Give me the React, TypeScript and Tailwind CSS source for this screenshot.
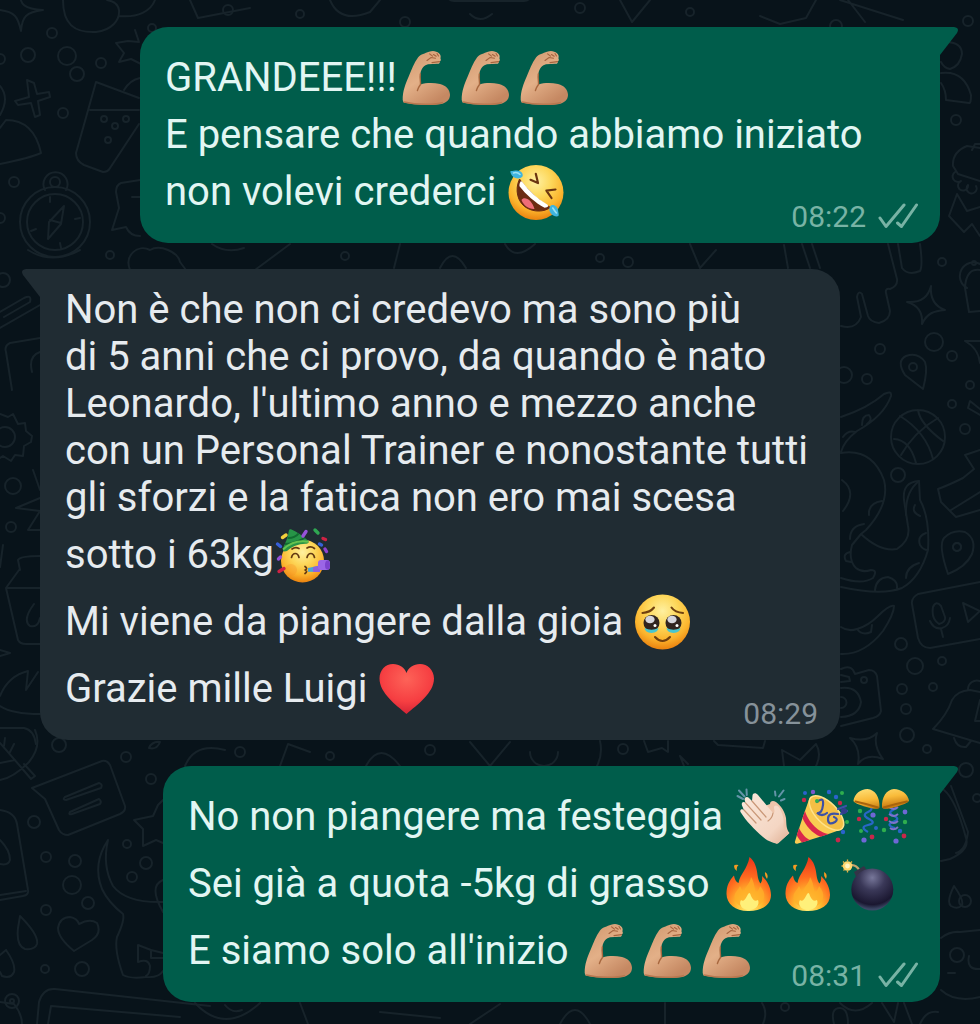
import type { ReactNode } from "react";

type EmojiName =
	| "arm"
	| "rofl"
	| "party"
	| "moved"
	| "heart"
	| "clap"
	| "popper"
	| "balls"
	| "fire"
	| "bomb";

interface Message {
	side: "in" | "out";
	width: string;
	time: string;
	lines: { text: string; emoji?: EmojiName[] }[];
}

const messages: Message[] = [
	{
		side: "out",
		width: "max-w-[800px]",
		time: "08:22",
		lines: [
			{ text: "GRANDEEE!!!", emoji: ["arm", "arm", "arm"] },
			{ text: "E pensare che quando abbiamo iniziato" },
			{ text: "non volevi crederci ", emoji: ["rofl"] },
		],
	},
	{
		side: "in",
		width: "max-w-[800px]",
		time: "08:29",
		lines: [
			{ text: "Non è che non ci credevo ma sono più" },
			{ text: "di 5 anni che ci provo, da quando è nato" },
			{ text: "Leonardo, l'ultimo anno e mezzo anche" },
			{ text: "con un Personal Trainer e nonostante tutti" },
			{ text: "gli sforzi e la fatica non ero mai scesa" },
			{ text: "sotto i 63kg", emoji: ["party"] },
			{ text: "Mi viene da piangere dalla gioia ", emoji: ["moved"] },
			{ text: "Grazie mille Luigi ", emoji: ["heart"] },
		],
	},
	{
		side: "out",
		width: "max-w-[777px]",
		time: "08:31",
		lines: [
			{
				text: "No non piangere ma festeggia ",
				emoji: ["clap", "popper", "balls"],
			},
			{
				text: "Sei già a quota -5kg di grasso ",
				emoji: ["fire", "fire", "bomb"],
			},
			{ text: "E siamo solo all'inizio ", emoji: ["arm", "arm", "arm"] },
		],
	},
];

function Gradients() {
	return (
		<svg className="absolute h-0 w-0" aria-hidden="true">
			<defs>
				<radialGradient id="face" cx="0.5" cy="0.3" r="0.7">
					<stop offset="0" stopColor="#fff0a0" />
					<stop offset="0.4" stopColor="#fdd75a" />
					<stop offset="0.75" stopColor="#fbb32c" />
					<stop offset="1" stopColor="#ea820f" />
				</radialGradient>
				<linearGradient id="skin" x1="0" y1="0" x2="0.6" y2="1">
					<stop offset="0" stopColor="#cf966c" />
					<stop offset="0.55" stopColor="#e3b088" />
					<stop offset="1" stopColor="#c58862" />
				</linearGradient>
				<linearGradient id="pale" x1="0" y1="0" x2="1" y2="1">
					<stop offset="0" stopColor="#fbe9dc" />
					<stop offset="0.7" stopColor="#f4d6c3" />
					<stop offset="1" stopColor="#dfae92" />
				</linearGradient>
				<radialGradient id="love" cx="0.5" cy="0.3" r="0.75">
					<stop offset="0" stopColor="#fd6358" />
					<stop offset="0.6" stopColor="#f63f42" />
					<stop offset="1" stopColor="#cf1f33" />
				</radialGradient>
				<radialGradient id="flame" cx="0.5" cy="0.95" r="0.9">
					<stop offset="0" stopColor="#fff37a" />
					<stop offset="0.35" stopColor="#ffb52c" />
					<stop offset="0.65" stopColor="#ff6a1f" />
					<stop offset="1" stopColor="#ee3a1c" />
				</radialGradient>
				<radialGradient id="iron" cx="0.5" cy="0.22" r="0.75">
					<stop offset="0" stopColor="#77779a" />
					<stop offset="0.4" stopColor="#3a3858" />
					<stop offset="0.85" stopColor="#1a1730" />
					<stop offset="1" stopColor="#3c4866" />
				</radialGradient>
				<linearGradient id="gold" x1="0" y1="0" x2="0.4" y2="1">
					<stop offset="0" stopColor="#ffe27a" />
					<stop offset="0.55" stopColor="#f9bb3a" />
					<stop offset="1" stopColor="#c97c12" />
				</linearGradient>
			</defs>
		</svg>
	);
}

const drawings: Record<EmojiName, ReactNode> = {
	arm: (
		<>
			<path
				d="M5.7 52C5.6 43 8.5 36 11.7 28.5C14.5 22 17 14.5 21 9.5C24 6 28 5.5 32 3.8C36 2 39.5 3.2 42 5.2C43.8 6.8 44 8.5 43.4 10.2C44.2 11.6 43.8 12.8 42.8 13.4C43 15.2 42 16 40 15.8L31 16.2C27.5 17 24.5 20 23.5 25C22.6 29 23.6 32 23.5 36.5C29 34.8 36 34.6 43 36C49.5 37.6 53 42 53 47C52.8 52 49.5 55 43 56.2C32 57.6 17 57 6.5 54.5Z"
				fill="url(#skin)"
			/>
			<path
				d="M23.5 36.5C22 38.5 20.8 40.5 20.4 42.5M23.3 26C22.6 31 23.8 33 23.5 36.5"
				fill="none"
				stroke="#a8683f"
				strokeWidth="1.4"
				strokeLinecap="round"
			/>
			<path
				d="M30 12.5L34 9.5L38.5 10.2M35 14.6L42.5 13.6M36.5 6.5L39.2 8.2M32.6 5.8L35.5 8.2M40 5.5L41.5 8"
				fill="none"
				stroke="#a5643e"
				strokeWidth="1.1"
				strokeLinecap="round"
			/>
			<path
				d="M7 54C20 57 38 57 46 54.5"
				fill="none"
				stroke="#b87850"
				strokeWidth="1.6"
			/>
		</>
	),
	rofl: (
		<>
			<circle cx="30" cy="30.5" r="27.5" fill="url(#face)" />
			<path
				d="M13.5 17C8.5 28 11.5 40 20 45.5C28 50.5 38 50 44.5 45.5C33 39 22 29 13.5 17Z"
				fill="#6b2b12"
				stroke="#6b2b12"
				strokeWidth="1"
			/>
			<path
				d="M15.5 38C18 33.5 26 37.5 28.5 47C23 47.5 17.5 43.5 15.5 38Z"
				fill="#ee6d77"
			/>
			<path
				d="M14.6 19.5C13.6 21 13.3 22.6 13.5 24.2C20 32.5 29 40.5 38.6 45.8C40.4 45.6 41.6 45 42.2 44.3C42.2 43.3 41.6 42.6 40.5 41.9C31 36.3 23 29 16.6 20.2C15.8 19.2 15.1 19 14.6 19.5Z"
				fill="#fff"
			/>
			<path
				d="M24.5 17.8L32 21L29.8 11.8M49.5 27.5L40.4 28.6L45.5 36"
				fill="none"
				stroke="#6b3510"
				strokeWidth="2.2"
				strokeLinecap="round"
				strokeLinejoin="round"
			/>
			<path
				d="M16.5 14.5C14.5 17 9.8 17 7.2 14.8C5 12.8 4 9.8 4.4 9.2C5.4 8.6 7 9.2 9.2 8.6C13.5 7.6 18 10.8 16.5 14.5Z"
				fill="#3fb4de"
			/>
			<path
				d="M45 43.5C48 41.8 51.4 44.6 52 48C52.3 50.6 53.2 53 52.4 54C50.6 55.2 46.2 53.8 44.6 51C43 48.4 42.8 45 45 43.5Z"
				fill="#3fb4de"
			/>
			<path
				d="M7.5 11Q11 9.6 14 12.5M46.8 46Q48.6 49 50.4 51"
				fill="none"
				stroke="#9be2f4"
				strokeWidth="1.6"
				strokeLinecap="round"
			/>
		</>
	),
	party: (
		<>
			<circle cx="28.5" cy="36" r="21.5" fill="url(#face)" />
			<circle cx="17" cy="45" r="6" fill="#f58a28" opacity="0.3" />
			<path
				d="M9 23C8.5 26.5 10 27 13 26C18 21.5 25 18.5 32.5 18.8C35 18.5 35.2 17 34 15.5C28 10.5 23 7 17.5 4.5C16 4 15 4.5 14.8 6C14 12 11.5 18 9 23Z"
				fill="#279447"
			/>
			<path
				d="M13.6 13C18 13.5 23 11 24.5 8.5M11 19C18 19 28 15 30.5 12.5"
				fill="none"
				stroke="#126b31"
				strokeWidth="2"
			/>
			<path
				d="M9 24.5Q20 14.5 34 16.8"
				fill="none"
				stroke="#65c34f"
				strokeWidth="2"
			/>
			<path
				d="M17.5 32.5Q18.5 28.5 21.3 28.5T25 32.5M33 32.5Q34 28.5 36.8 28.5T40.5 32.5M18 24Q21.5 21.5 25 23.5M33 23Q37 20.5 40.5 23.5M31 41.5Q34 43.5 31.4 45Q34 46.5 31 48.5"
				fill="none"
				stroke="#643a12"
				strokeWidth="1.7"
				strokeLinecap="round"
			/>
			<path d="M34 43L46 40.5V47L34 46.8Z" fill="#4aa4d6" />
			<path d="M39 42L46 40.5V47L39 47Z" fill="#8d62dc" />
			<rect x="44" y="35" width="12" height="10" rx="3" fill="#9b66e6" />
			<ellipse cx="53.5" cy="40" rx="2.5" ry="4.6" fill="#7c42cc" />
			<g strokeWidth="3.4" strokeLinecap="round">
				<path d="M29 11L32 6.5M4.5 34L6.5 32" stroke="#9552d9" />
				<path d="M41 5L44 8" stroke="#2fa852" />
				<path d="M49 13.5L51.5 14.5M5 46.5L10 43.5" stroke="#cf2244" />
				<path d="M45.5 19L47.5 20M3.5 19L6.5 21.5" stroke="#375fd8" />
				<path d="M8.5 12.5L12 10" stroke="#f2d13c" />
				<path d="M51 24L52.5 26.5" stroke="#8f43cf" />
			</g>
		</>
	),
	moved: (
		<>
			<circle cx="29.5" cy="30" r="27.5" fill="url(#face)" />
			<circle cx="18.5" cy="31" r="8" fill="#30241f" />
			<circle cx="40.5" cy="31" r="8" fill="#30241f" />
			<path
				d="M11.5 36Q18.5 39.5 25.5 36Q25 40.5 18.5 41Q12 40.5 11.5 36ZM33.5 36Q40.5 39.5 47.5 36Q47 40.5 40.5 41Q34 40.5 33.5 36Z"
				fill="#48c6cf"
			/>
			<ellipse cx="17" cy="27.5" rx="4.6" ry="3.8" fill="#d4d5dc" />
			<ellipse cx="39" cy="27.5" rx="4.6" ry="3.8" fill="#d4d5dc" />
			<circle cx="22" cy="33.5" r="1.5" fill="#fff" />
			<circle cx="44" cy="33.5" r="1.5" fill="#fff" />
			<path
				d="M9.5 21Q17 20.5 21 15.5M50 21Q42 20.5 38.5 15.5M22 45Q29.5 53 37 45"
				fill="none"
				stroke="#70400f"
				strokeWidth="2.1"
				strokeLinecap="round"
			/>
		</>
	),
	heart: (
		<path
			d="M29.5 55C19 46 2.5 34 2.5 19.5C2.5 11 8.5 5 16 5C22.5 5 27.5 8.5 29.5 14C31.5 8.5 36.5 5 43 5C50.5 5 57 11 57 19.5C57 34 40 46 29.5 55Z"
			fill="url(#love)"
		/>
	),
	clap: (
		<>
			<path
				d="M37 17C37 14 40 13 43 15C48 18.5 52 25 53 31C53.5 37 53 42 56.5 46L45 56.5C40 54 32 50 28 43L24 22Z"
				fill="#eec5ab"
			/>
			<path
				d="M7.5 25C6.5 22.5 9 21.5 11 23.2L9 18.5C8 15 10.5 14 12.5 15.8L11.5 12.5C12 9.5 14.5 9.5 16.5 11.5L19 14L19.5 8.5C20 5.5 23 5.5 25 8L40 26C41.5 27 41.8 24 41 21C40.5 17.5 44.5 17.5 46.5 21C49.5 27 51.5 32 50.5 38C50 42 53 44.5 56 46.5L44 57C39 55 34 54 30 50C21.5 42.5 13 34 7.5 25Z"
				fill="url(#pale)"
			/>
			<path
				d="M11 23L23 36M12.5 15.8L28 33M19 14L33 30M40 26C39.5 30 38 32 35 34"
				fill="none"
				stroke="#c99777"
				strokeWidth="1.2"
				strokeLinecap="round"
			/>
			<path
				d="M4.5 9L10 12M6 3.5L11.5 9.5M13.5 2.5L13.8 8M42 4.5L42.5 8.5M50.5 3.5L46 9.5M51.5 12L48 13.5"
				stroke="#6394a8"
				strokeWidth="2"
				strokeLinecap="round"
			/>
		</>
	),
	popper: (
		<>
			<path
				d="M3 54.5C8 38 13.5 22 18 10C25 5 53 27 50.5 42C36 47.5 20 52.5 6 56.5C4 57 2.5 56.5 3 54.5Z"
				fill="#f9cb52"
			/>
			<path
				d="M13 24C16 35 27 46 37 47L28.5 49.8C20 46 13.5 38.5 10.5 31ZM7 41C10 47 14 51.5 18 53L10 55.4C7.5 53 5.5 50 4.8 48Z"
				fill="#da274c"
			/>
			<ellipse
				cx="34.5"
				cy="26"
				rx="22"
				ry="10.5"
				transform="rotate(45 34.5 26)"
				fill="#f3bf45"
				stroke="#ffe28a"
				strokeWidth="1.5"
			/>
			<path
				d="M25 15Q32 9 31 18T25 26Q30 30 35 26M46 27Q36 25 36 32T43 35Q47 32 42 30M46 22L54 19M49 27L55 24"
				fill="none"
				stroke="#3c51a5"
				strokeWidth="2.2"
				strokeLinecap="round"
			/>
			<g fill="#2b63cc">
				<circle cx="13" cy="6" r="2" />
				<circle cx="37" cy="5" r="2.2" />
				<circle cx="44" cy="10" r="2.2" />
				<circle cx="51" cy="45" r="2.2" />
			</g>
			<g fill="#2fae4e">
				<circle cx="50" cy="6" r="2" />
				<circle cx="55" cy="35" r="2" />
				<circle cx="25" cy="14" r="2" />
			</g>
			<g fill="#c8274b">
				<circle cx="12" cy="13" r="2.2" />
				<circle cx="48" cy="16" r="2.2" />
				<circle cx="46" cy="53" r="2.4" />
			</g>
			<circle cx="21" cy="5" r="2.2" fill="#7a58cc" />
			<circle cx="52" cy="24" r="3" fill="#323d8c" />
		</>
	),
	balls: (
		<>
			<path
				d="M17 17Q24 22 17 25T18 32T17 38T17 45M41 16Q48 20 42 23T43 29T42 35T44 41"
				fill="none"
				stroke="#2867c7"
				strokeWidth="2.2"
			/>
			<path
				d="M38 20Q43 24 47 20M38 27Q43 31 47 27M38 34Q43 38 47 34M39 41Q43 44 47 40"
				fill="none"
				stroke="#7f73c9"
				strokeWidth="1.8"
			/>
			<path
				d="M2.5 13.5C3.5 7 9.5 2 16.5 2C24 2.5 29 10 28.5 20.5C27.5 22.5 22 22 15.5 20C8 17.8 2 15.5 2.5 13.5ZM31 20.5C30.5 10 35.5 2.5 43 2C50 2 57 7 58 13.5C58 15.5 52 17.8 44.5 20C38 22 32 22.5 31 20.5Z"
				fill="url(#gold)"
			/>
			<path
				d="M4.5 14.5Q16 17 27 20.5M56 14.5Q44 17 32.5 20.5"
				fill="none"
				stroke="#a8640d"
				strokeWidth="2"
				strokeLinecap="round"
			/>
			<g fill="#2fae4e">
				<circle cx="9" cy="24" r="2.2" />
				<circle cx="10" cy="44" r="2" />
				<circle cx="33" cy="43" r="2.2" />
				<circle cx="54" cy="35" r="2.2" />
			</g>
			<g fill="#c8274b">
				<circle cx="8" cy="32" r="2.2" />
				<circle cx="21" cy="50" r="2.4" />
				<circle cx="35" cy="32" r="2.2" />
				<circle cx="53" cy="49" r="2.4" />
			</g>
			<g fill="#6f67d6">
				<circle cx="22" cy="28" r="2.6" />
				<circle cx="13" cy="53" r="2.6" />
				<circle cx="45" cy="54" r="2.6" />
				<circle cx="54" cy="25" r="2.4" />
			</g>
			<g fill="#2867c7">
				<circle cx="25" cy="41" r="2" />
				<circle cx="49" cy="44" r="2.2" />
			</g>
		</>
	),
	fire: (
		<>
			<path
				d="M29 57C16 57.5 6.5 50 6.5 40C6.5 32 9 27 14 21.5C14.5 25 16 28 18.5 29C20 20 27.5 15 29.5 3C35 7 37 15 37.5 21C38 25 39 27.5 40.5 29.5C42 27.5 42.5 24.5 42 22C47.5 27 51 34 51 41C51 51 42 57 29 57Z"
				fill="url(#flame)"
			/>
			<path
				d="M14.5 11Q16.5 10.5 18.5 11Q16 13 17 17Q13 14.5 14.5 11ZM45 18Q49 20 47 25Q44.5 22 45 18Z"
				fill="#f79b22"
			/>
			<path
				d="M29 54C20 54 14 48.5 14.5 42C15 38 18 36 20 32C21.5 35 22 37 24 38C25 32 30 30 31 23C35 29 34 35 36 38C38 37 39.5 34.5 40 32C43.5 36 45 40 44 44C42.5 50 36.5 54 29 54Z"
				fill="#ffaf2a"
				opacity="0.75"
			/>
			<path
				d="M29 56C21 55.5 18.5 50 21 46C23 48 25 46 27 42C29 38 30 38 31 42C33 46 35 48 38 46C40 51 36 55.5 29 56Z"
				fill="#fff07a"
			/>
		</>
	),
	bomb: (
		<>
			<path
				d="M11 12Q17 9 22 17"
				fill="none"
				stroke="#c7a56c"
				strokeWidth="2.2"
			/>
			<path d="M16 18L26 12L30 18L20 27Z" fill="#343447" />
			<circle cx="34.3" cy="35.5" r="21" fill="url(#iron)" />
			<circle cx="9.5" cy="12" r="4.8" fill="#ffd96e" />
			<circle cx="9.5" cy="12" r="2.4" fill="#fff6c4" />
			<path
				d="M9.5 5.5V7M3.5 12H5M5 7.5L6 8.5M14 7.5L13 8.5M5.5 16.5L6.5 15.5M9.5 17V18.5"
				stroke="#eeb03e"
				strokeWidth="1.3"
			/>
		</>
	),
};

const emojiLabels: Record<EmojiName, string> = {
	arm: "💪🏼",
	rofl: "🤣",
	party: "🥳",
	moved: "🥹",
	heart: "❤️",
	clap: "👏🏻",
	popper: "🎉",
	balls: "🎊",
	fire: "🔥",
	bomb: "💣",
};

function Emoji({ name }: { name: EmojiName }) {
	return (
		<svg
			className="h-[59px] w-[59px] shrink-0"
			viewBox="0 0 59 59"
			role="img"
			aria-label={emojiLabels[name]}
		>
			{drawings[name]}
		</svg>
	);
}

// x, y, radius
const dots = [
	[52, 33, 5], [28, 55, 7], [67, 56, 9], [101, 63, 5], [77, 74, 7],
	[63, 113, 5], [14, 182, 5], [110, 255, 4], [0, 59, 5], [0, 218, 5],
	[152, 28, 4], [836, 26, 6], [968, 21, 5], [956, 120, 5], [942, 262, 4],
	[934, 342, 9], [880, 349, 5], [952, 356, 5], [844, 375, 8], [867, 379, 5],
	[970, 385, 4], [952, 404, 4], [965, 429, 5], [898, 475, 7], [957, 547, 4],
	[901, 644, 6], [915, 666, 8], [942, 661, 4], [902, 689, 5], [933, 687, 4],
	[906, 709, 5], [907, 735, 7], [927, 749, 4], [59, 745, 7], [126, 757, 5],
	[151, 779, 5], [34, 822, 6], [46, 857, 5], [75, 861, 6], [72, 885, 9],
	[127, 844, 4], [146, 863, 6], [132, 877, 5], [46, 910, 5], [88, 903, 6],
	[45, 969, 4], [82, 969, 7], [3, 280, 7], [13, 486, 8], [11, 527, 5],
	[5, 437, 10], [623, 749, 5], [966, 770, 7], [977, 798, 4], [965, 901, 6],
	[785, 1007, 4], [228, 10, 5], [300, 14, 4], [405, 22, 5], [580, 8, 5],
	[690, 12, 4], [600, 258, 4], [628, 262, 5], [345, 256, 4], [240, 752, 5],
	[330, 756, 4], [430, 750, 5], [12, 1001, 7], [12, 1001, 2],
];

const doodles = [
	// sparkles and plus
	"M20 -6C20 4 24 9 43 10C26 12 22 17 21 31C18 17 15 12 0 10M27 80L34 83L37 94L49 92L50 97L38 101L40 115L35 117L31 103L18 105L15 101L29 97Z",
	"M931 286C930 298 934 306 945 310C934 311 927 313 922 324C923 312 918 305 907 302C920 303 928 298 931 286Z",
	"M877 733C874 742 876 750 883 759C872 755 864 756 858 764C860 753 858 745 850 738C861 741 870 740 877 733Z",
	"M965 341H980M965 341C974 346 979 353 980 363",
	// cloud, star, cup
	"M63 0C63 24 74 33 96 32C112 30 120 20 119 10C118 4 113 1 107 0M119 16C138 18 151 11 155 0",
	"M135 30L139 42L128 41L116 43L124 53L119 62L131 59L141 64M96 82L139 98M96 82L76 153Q76 161 84 165L103 172Q108 172 110 168L139 124M90 110H139M124 90Q130 80 140 78",
	"M101 119A3 3 0 1 0 107 119A3 3 0 1 0 101 119M123 119A3 3 0 1 0 129 119A3 3 0 1 0 123 119M112 126A3 3 0 1 0 118 126A3 3 0 1 0 112 126M105 140A3 3 0 1 0 111 140A3 3 0 1 0 105 140",
	"M0 128L6 120Q34 120 41 153Q30 158 0 164M0 86Q10 98 0 115",
	// compass
	"M20 222A35 35 0 1 0 90 222A35 35 0 1 0 20 222M27 222A28 28 0 1 0 83 222A28 28 0 1 0 27 222M45 190A12 12 0 1 1 66 190M50 182A5 5 0 1 0 60 182A5 5 0 1 0 50 182M64 206L49 222L48 239L61 224ZM50 220L61 223M50 197V202M75 219L80 218M31 231L36 229M60 243L61 248",
	"M140 180L121 183Q116 185 116 192L119 208L112 230L126 227Q130 236 140 236M132 197H140M130 270C124 255 138 244 150 250C160 244 178 252 180 262L186 270M212 244Q226 254 244 248M255 270L290 244M400 244L394 268M440 268Q452 244 466 268M505 244Q515 262 535 244M690 244L700 268L716 250",
	"M28 250Q52 265 80 250M0 328L40 305M0 312L24 298Q32 294 30 302L4 317M40 338L10 343Q4 346 6 352L12 390M40 352Q28 356 32 372",
	// gear, sparkle, milk carton
	"M0 414L8 417L13 414L18 424L25 423L26 431L32 436L31 442L24 446L23 456L15 455L11 461L3 456L0 458M33 470L40 490M16 508L40 498M16 508L40 511L28 530H40M20 570L18 560Q20 556 40 556M19 570L6 588L18 640Q20 644 26 644H40M6 588H40M34 604Q22 620 30 626Q38 628 40 618M0 650L10 653L0 656M0 696Q8 676 28 671L26 690L38 672M0 706Q12 714 40 714M0 728H24Q34 730 36 744M3 545L0 567",
	// top right edge
	"M945 42Q962 42 962 54Q960 66 950 69Q944 68 941 62M941 73Q964 70 971 95Q971 104 969 103L946 100Q946 90 941 83M980 148L967 146Q952 152 953 166L958 174L980 181M972 150L975 144H980M955 172A5 5 0 1 0 961 181A5 5 0 1 0 968 185A5 5 0 1 0 976 186M957 194L949 216L964 232L972 224L980 236M957 194L967 211L980 207",
	"M784 245L788 268M802 244L810 268M812 244L820 268M888 244L897 279Q898 286 890 289Q885 288 886 293L890 311Q890 320 879 323Q870 322 868 316L862 294Q858 290 857 297L861 317Q856 330 841 326M898 244L902 268Q908 276 920 271Q923 266 920 244M967 288A7 7 0 1 1 980 264M980 270Q966 268 965 288L969 312L980 311M972 263A2 2 0 1 0 976 263A2 2 0 1 0 972 263M903 20L840 0M865 22L848 0",
	// location pins
	"M923 389L905 375Q896 361 906 356Q918 352 925 362Q928 370 923 389ZM909 367A4 4 0 1 0 917 367A4 4 0 1 0 909 367",
	"M948 574Q938 545 944 538Q953 529 965 532Q977 539 972 554Q966 567 948 574ZM953 547A4 4 0 1 0 961 547A4 4 0 1 0 953 547",
	// basketball
	"M891 437A27 27 0 1 0 945 437A27 27 0 1 0 891 437M900 416Q926 432 933 459M918 410Q920 424 943 441M938 418Q914 432 901 455M894 439Q910 440 916 463",
	// octopus
	"M841 417Q868 408 884 394Q892 390 891 396Q884 416 857 431Q844 441 841 452M862 425Q862 415 869 415Q873 420 867 424M843 437Q848 430 855 432M841 453Q872 448 884 480Q890 504 866 530L861 534L852 545Q848 560 856 568Q862 573 871 570Q878 570 873 578Q862 585 841 578M861 534Q880 552 897 549Q911 540 908 526L904 500Q902 482 919 481L920 500Q930 518 928 550Q920 578 902 588Q882 596 841 587M869 515Q868 503 882 501M850 539Q850 526 864 524M920 516Q911 512 915 505M926 533Q917 536 920 545Q923 550 928 550M906 578Q906 567 919 563M875 590Q876 578 888 577Q898 580 897 588M850 552Q842 554 846 561L851 562M842 480Q858 492 843 511",
	// slice, boot and voice note
	"M919 481Q905 492 906 515M841 627Q848 632 857 629Q868 626 878 616Q890 604 894 606Q894 614 883 631Q864 655 841 654M857 629Q862 636 871 632L872 625M980 450L965 455L974 469L963 478Q949 485 938 489L941 502L956 517L980 510M980 492L951 510M980 409L970 401L968 408L980 415",
	"M980 582L918 594Q911 598 912 604L918 638Q921 648 930 648L980 639M933 607Q931 619 939 624Q946 622 945 617L941 606Q936 600 933 607M930 621Q934 630 942 628Q949 626 950 618M941 629L943 637M963 603L968 622L980 611Z",
	// camera
	"M841 669Q849 665 853 670L855 674L869 670Q875 670 877 676L881 711Q880 716 873 718L841 726M841 688Q858 686 861 702Q859 716 841 717M841 697A5 5 0 1 1 841 708M841 675L849 677L850 681L841 682M861 680A3 3 0 1 0 867 680A3 3 0 1 0 861 680",
	// bell
	"M933 729Q947 715 952 700Q957 691 970 690L980 692M933 729L980 743M954 738Q957 748 966 747L971 741M968 690A9 9 0 0 1 980 681M980 700L975 721H980",
	"M600 741Q603 754 597 766M644 741L648 752L662 748L668 752V741M714 741L718 745L763 748L765 741M684 766L680 756L688 764M784 766L782 750L800 760L816 744Q822 754 816 766M280 766L288 744L310 752M366 766Q380 740 400 766M470 742L490 766L510 742M530 752A14 14 0 1 0 558 752M185 766Q195 742 225 750",
	// leaf and chat note
	"M20 766L31 779L35 776L24 764M35 730Q42 746 29 762Q13 778 0 780M0 743L20 766M4 746L5 738M10 752L14 744M0 763L15 760M149 748Q152 741 160 742Q157 750 149 748M32 788L102 761Q107 760 110 765L125 806Q126 811 120 814L68 835Q62 835 59 830L45 799ZM65 797L99 783Q103 784 101 788L66 800Q62 800 65 797M70 812L99 799Q102 801 100 804L72 814Q68 815 70 812",
	"M0 810Q15 812 17 824L28 890Q29 895 23 896L0 900M26 891L0 895M0 840Q10 850 10 860Q8 866 0 864",
	// drops and heart
	"M20 916Q39 935 37 944Q35 950 25 949Q16 946 18 928ZM6 950Q16 964 14 972Q11 979 2 976L0 972M0 955L6 950M74 951Q58 938 58 928Q60 917 70 917Q77 918 79 924Q90 918 97 923Q102 933 92 940ZM954 886Q964 900 962 905Q958 910 951 906Q946 902 954 886Z",
	// star and dinosaur
	"M163 800L158 805L153 816L134 820L143 829L143 846L156 840L163 843M108 840Q92 864 102 889Q108 902 123 914Q125 920 117 937Q114 950 123 975Q130 979 146 977Q159 978 163 971M108 840Q102 866 113 886Q126 903 163 902M163 880Q148 886 163 912M138 945V962Q148 958 150 966Q150 974 146 976M138 945L151 950V958H163M151 950L163 953",
	"M37 1024L39 1002Q43 988 55 989L210 1006M48 1024L51 1006L180 1017M0 1002L14 1004Q22 1014 22 1024",
	"M195 1003Q225 1035 260 1003M225 1005Q232 1014 242 1010M665 1003V1024M762 1003Q768 1012 763 1024M834 1024Q830 1008 840 1008Q848 1008 848 1024M840 1003Q855 1018 872 1003M882 1003L894 1022L898 1003M904 1003L912 1024M920 1024Q926 1010 938 1012M300 1003L308 1024M380 1012L440 1018M470 1024L500 1004M560 1024Q575 996 590 1024",
	// bag and cat on the right
	"M944 790Q956 800 966 838Q970 850 950 859L941 861M951 786L968 832Q966 850 956 853M941 938Q950 931 960 932L980 930M941 990Q955 1003 980 997M950 955A7 7 0 1 0 964 955A7 7 0 1 0 950 955M969 956Q966 970 980 969M948 973H955",
	"M190 0L198 18L250 8M330 0Q340 24 370 12L380 0M470 14Q480 24 492 14M620 0L632 22L650 0M760 16L780 24L806 18L816 0",
];

function Wallpaper() {
	return (
		<svg
			className="absolute inset-0 h-full w-full"
			viewBox="0 0 980 1024"
			preserveAspectRatio="xMidYMin slice"
			fill="none"
			stroke="#17232a"
			strokeWidth="2"
			strokeLinecap="round"
			strokeLinejoin="round"
			aria-hidden="true"
		>
			{dots.map(([x, y, r]) => (
				<circle key={`${x}-${y}-${r}`} cx={x} cy={y} r={r} />
			))}
			{doodles.map((d) => (
				<path key={d} d={d} />
			))}
			<rect x="446" y="-20" width="86" height="21" rx="8" fill="#17232a" />
		</svg>
	);
}

function DoubleCheck() {
	return (
		<svg
			className="h-[30px] w-10"
			viewBox="0 0 40 30"
			fill="none"
			stroke="currentColor"
			strokeWidth="3"
			strokeLinecap="round"
			strokeLinejoin="round"
			role="img"
			aria-label="Consegnato"
		>
			<path d="M2 16L8 24.5L26 3" />
			<path d="M19.5 21L23.5 24.5L38.5 3" />
		</svg>
	);
}

function Tail({ side }: { side: Message["side"] }) {
	if (side === "in") {
		return (
			<svg
				className="absolute top-0 right-full h-7 w-[18px] text-[#202c33]"
				viewBox="0 0 18 28"
				fill="currentColor"
				aria-hidden="true"
			>
				<path d="M18 0H4Q-2 1 1 6L18 28Z" />
			</svg>
		);
	}
	return (
		<svg
			className="absolute top-0 left-full h-7 w-[18px] text-[#005d4b]"
			viewBox="0 0 18 28"
			fill="currentColor"
			aria-hidden="true"
		>
			<path d="M0 0H14Q20 1 17 6L0 28Z" />
		</svg>
	);
}

function Bubble({ message }: { message: Message }) {
	const out = message.side === "out";

	return (
		<article
			className={`relative w-full pt-[17px] pb-[11px] ${message.width} ${
				out
					? "self-end rounded-[28px] rounded-tr-none bg-[#005d4b] text-[#e2f6f3]"
					: "self-start rounded-[28px] rounded-tl-none bg-[#202c33] text-[#e6ebef]"
			}`}
		>
			<Tail side={message.side} />
			<div className="px-[25px] text-[40px] leading-[47px]">
				{message.lines.map((line) => (
					<p
						key={line.text}
						className={`flex items-center whitespace-pre ${line.emoji ? "h-[67px]" : ""}`}
					>
						{line.text}
						{line.emoji?.map((name, i) => (
							<Emoji key={i} name={name} />
						))}
					</p>
				))}
			</div>
			<footer
				className={`-mt-[23px] flex items-center justify-end gap-3 px-[22px] text-[30px] leading-[30px] ${
					out ? "text-[#78b3a5]" : "text-[#86929a]"
				}`}
			>
				<time>{message.time}</time>
				{out && <DoubleCheck />}
			</footer>
		</article>
	);
}

export default function App() {
	return (
		<main className="relative min-h-screen overflow-hidden bg-[#08131a] font-[Roboto,sans-serif]">
			<Gradients />
			<Wallpaper />
			<div className="relative flex flex-col gap-[26px] px-10 pt-[27px] pb-[22px]">
				{messages.map((message) => (
					<Bubble key={message.time} message={message} />
				))}
			</div>
		</main>
	);
}
